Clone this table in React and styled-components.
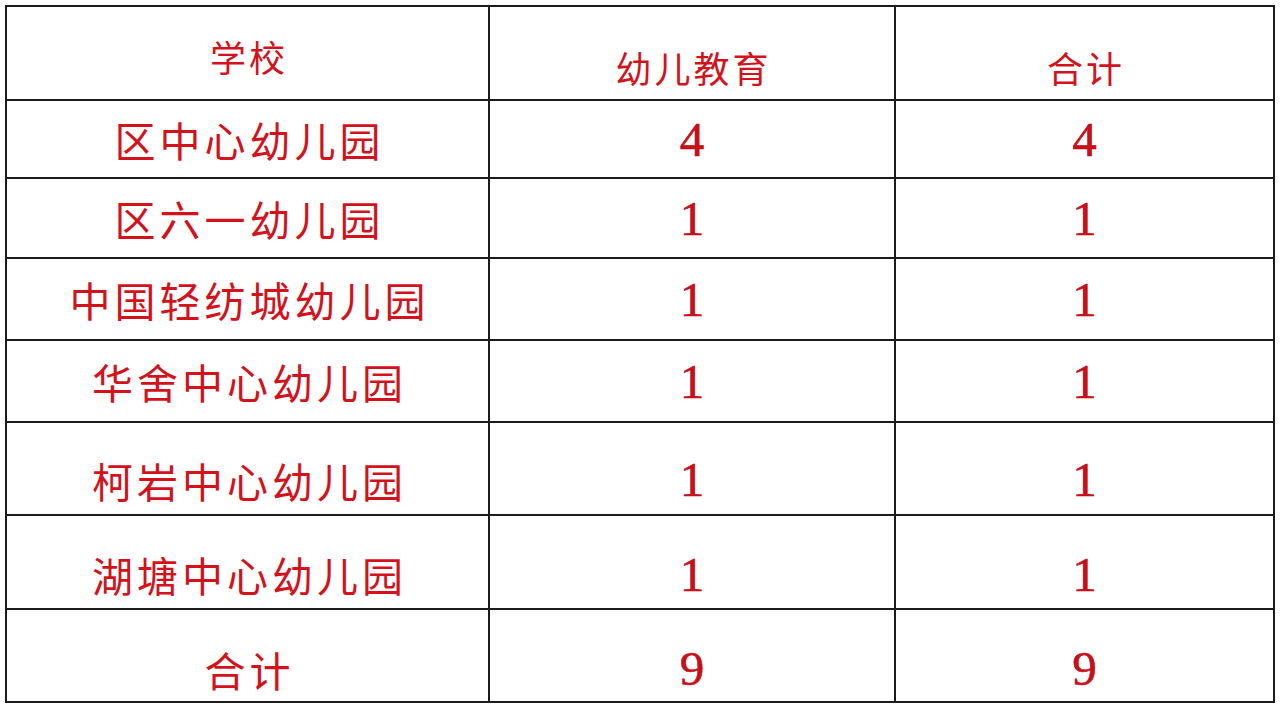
import React from 'react';
import styled, { createGlobalStyle } from 'styled-components';

const GlobalStyle = createGlobalStyle`
  html, body {
    margin: 0;
    padding: 0;
    background: #ffffff;
  }
`;

const Page = styled.div`
  padding: 5px 0 0 5px;
  width: 1280px;
  height: 707px;
  box-sizing: border-box;
  background: #fff;
`;

const Table = styled.div`
  display: grid;
  grid-template-columns: 481px 404px 377px;
  grid-template-rows: 92px 76px 78px 80px 80px 91px 92px 91px;
  gap: 2px;
  padding: 2px;
  width: max-content;
  background: #1c1c1c;
`;

const Cell = styled.div`
  background: #fff;
  display: flex;
  align-items: center;
  justify-content: center;
  box-sizing: border-box;
  padding-top: ${p => (p.$shift || 0) * 2}px;
  color: #d3121c;
`;

const HeadText = styled.span`
  font-family: "Noto Sans CJK SC", "Noto Sans", sans-serif;
  font-size: 36px;
  letter-spacing: 3px;
  margin-right: -3px;
`;

const NameText = styled.span`
  font-family: "Noto Sans CJK SC", "Noto Sans", sans-serif;
  font-size: 41px;
  letter-spacing: 4px;
  margin-right: -4px;
`;

const Num = styled.span`
  font-family: "Liberation Serif", "Times New Roman", serif;
  font-size: 49px;
  color: #c8101a;
  -webkit-text-stroke: 0.6px #c8101a;
`;

const rows = [
  { name: '区中心幼儿园', edu: 4, total: 4, shift: 0 },
  { name: '区六一幼儿园', edu: 1, total: 1, shift: 0 },
  { name: '中国轻纺城幼儿园', edu: 1, total: 1, shift: 0 },
  { name: '华舍中心幼儿园', edu: 1, total: 1, shift: 0 },
  { name: '柯岩中心幼儿园', edu: 1, total: 1, shift: 11 },
  { name: '湖塘中心幼儿园', edu: 1, total: 1, shift: 12 },
];

export default function App() {
  return (
    <>
      <GlobalStyle />
      <Page>
        <Table>
          <Cell $shift={3}><HeadText>学校</HeadText></Cell>
          <Cell $shift={14}><HeadText>幼儿教育</HeadText></Cell>
          <Cell $shift={14}><HeadText>合计</HeadText></Cell>
          {rows.map(r => (
            <React.Fragment key={r.name}>
              <Cell $shift={r.shift}><NameText>{r.name}</NameText></Cell>
              <Cell $shift={r.shift}><Num>{r.edu}</Num></Cell>
              <Cell $shift={r.shift}><Num>{r.total}</Num></Cell>
            </React.Fragment>
          ))}
          <Cell $shift={13}><NameText>合计</NameText></Cell>
          <Cell $shift={13}><Num>9</Num></Cell>
          <Cell $shift={13}><Num>9</Num></Cell>
        </Table>
      </Page>
    </>
  );
}
